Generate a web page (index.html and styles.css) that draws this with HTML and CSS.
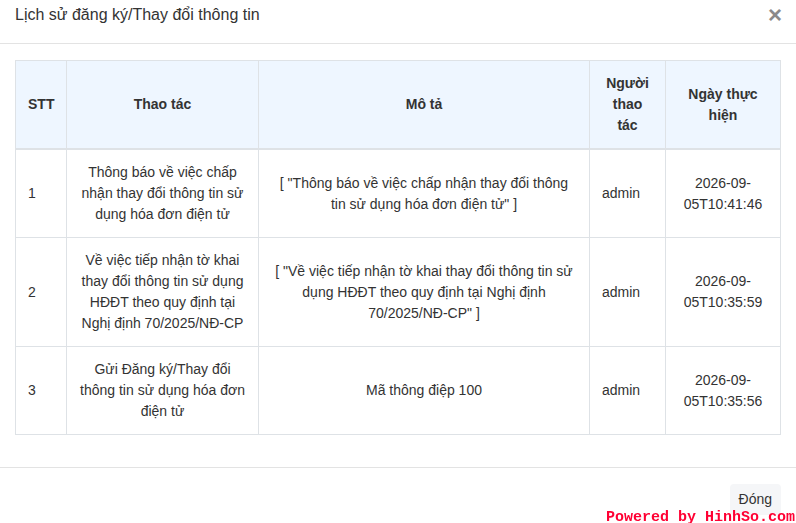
FILE: index.html
```html
<!DOCTYPE html>
<html lang="vi">
<head>
<meta charset="utf-8">
<title>Lịch sử đăng ký/Thay đổi thông tin</title>
<link rel="stylesheet" href="styles.css">
</head>
<body>
<div class="modal">
  <div class="modal-header">
    <h5 class="modal-title">Lịch sử đăng ký/Thay đổi thông tin</h5>
    <button class="close" type="button" aria-label="Close">×</button>
  </div>
  <div class="modal-body">
    <table class="history">
      <colgroup>
        <col class="c-stt"><col class="c-action"><col class="c-desc"><col class="c-user"><col class="c-date">
      </colgroup>
      <thead>
        <tr>
          <th class="left">STT</th>
          <th>Thao tác</th>
          <th>Mô tả</th>
          <th>Người thao tác</th>
          <th>Ngày thực hiện</th>
        </tr>
      </thead>
      <tbody>
        <tr>
          <td class="left">1</td>
          <td>Thông báo về việc chấp nhận thay đổi thông tin sử dụng hóa đơn điện tử</td>
          <td>[ "Thông báo về việc chấp nhận thay đổi thông tin sử dụng hóa đơn điện tử" ]</td>
          <td class="left">admin</td>
          <td>2026-09-05T10:41:46</td>
        </tr>
        <tr>
          <td class="left">2</td>
          <td>Về việc tiếp nhận tờ khai thay đổi thông tin sử dụng HĐĐT theo quy định tại Nghị định 70/2025/NĐ-CP</td>
          <td>[ "Về việc tiếp nhận tờ khai thay đổi thông tin sử dụng HĐĐT theo quy định tại Nghị định 70/2025/NĐ-CP" ]</td>
          <td class="left">admin</td>
          <td>2026-09-05T10:35:59</td>
        </tr>
        <tr>
          <td class="left">3</td>
          <td>Gửi Đăng ký/Thay đổi thông tin sử dụng hóa đơn điện tử</td>
          <td>Mã thông điệp 100</td>
          <td class="left">admin</td>
          <td>2026-09-05T10:35:56</td>
        </tr>
      </tbody>
    </table>
  </div>
  <div class="modal-footer">
    <button class="btn" type="button">Đóng</button>
  </div>
</div>
<div class="watermark">Powered by HinhSo.com</div>
</body>
</html>
```
FILE: styles.css
```css
html, body {
  margin: 0;
  padding: 0;
  background: #fff;
}
body {
  font-family: "Liberation Sans", Arial, sans-serif;
  font-size: 14px;
  line-height: 21px;
  color: #333;
}
.modal {
  width: 796px;
}
.modal-header {
  display: flex;
  align-items: center;
  justify-content: space-between;
  padding: 3px 15px 16px 15px;
  border-bottom: 1px solid #e3e3e3;
}
.modal-title {
  margin: 0;
  font-size: 16px;
  font-weight: normal;
  line-height: 24px;
  color: #333;
}
.close {
  border: 0;
  background: none;
  padding: 0;
  margin-right: -1px;
  font-family: "Liberation Sans", Arial, sans-serif;
  font-size: 24px;
  font-weight: bold;
  line-height: 24px;
  color: #8a8a8a;
  cursor: pointer;
}
.modal-body {
  padding: 16px 15px;
}
.history {
  width: 766px;
  border-collapse: collapse;
  table-layout: fixed;
  margin-bottom: 16px;
}
.c-stt { width: 51px; }
.c-action { width: 192px; }
.c-desc { width: 331px; }
.c-user { width: 76px; }
.c-date { width: 115px; }
.history th,
.history td {
  border: 1px solid #dee2e6;
  padding: 12px 12px;
  text-align: center;
  vertical-align: middle;
}
.history th {
  background: #eef6ff;
  font-weight: bold;
  color: #333;
  border-bottom: 2px solid #dee2e6;
}
.history .left {
  text-align: left;
}
.modal-footer {
  display: flex;
  justify-content: flex-end;
  padding: 16px 15px;
  border-top: 1px solid #e3e3e3;
}
.btn {
  font-family: "Liberation Sans", Arial, sans-serif;
  font-size: 14px;
  line-height: 21px;
  color: #333;
  background: #f5f6f8;
  border: 0;
  border-radius: 4px;
  padding: 5px 9px;
}
.watermark {
  position: fixed;
  right: 1px;
  bottom: -4px;
  font-family: "Liberation Mono", monospace;
  font-size: 15px;
  font-weight: bold;
  line-height: 18px;
  color: #ff0033;
}
```
